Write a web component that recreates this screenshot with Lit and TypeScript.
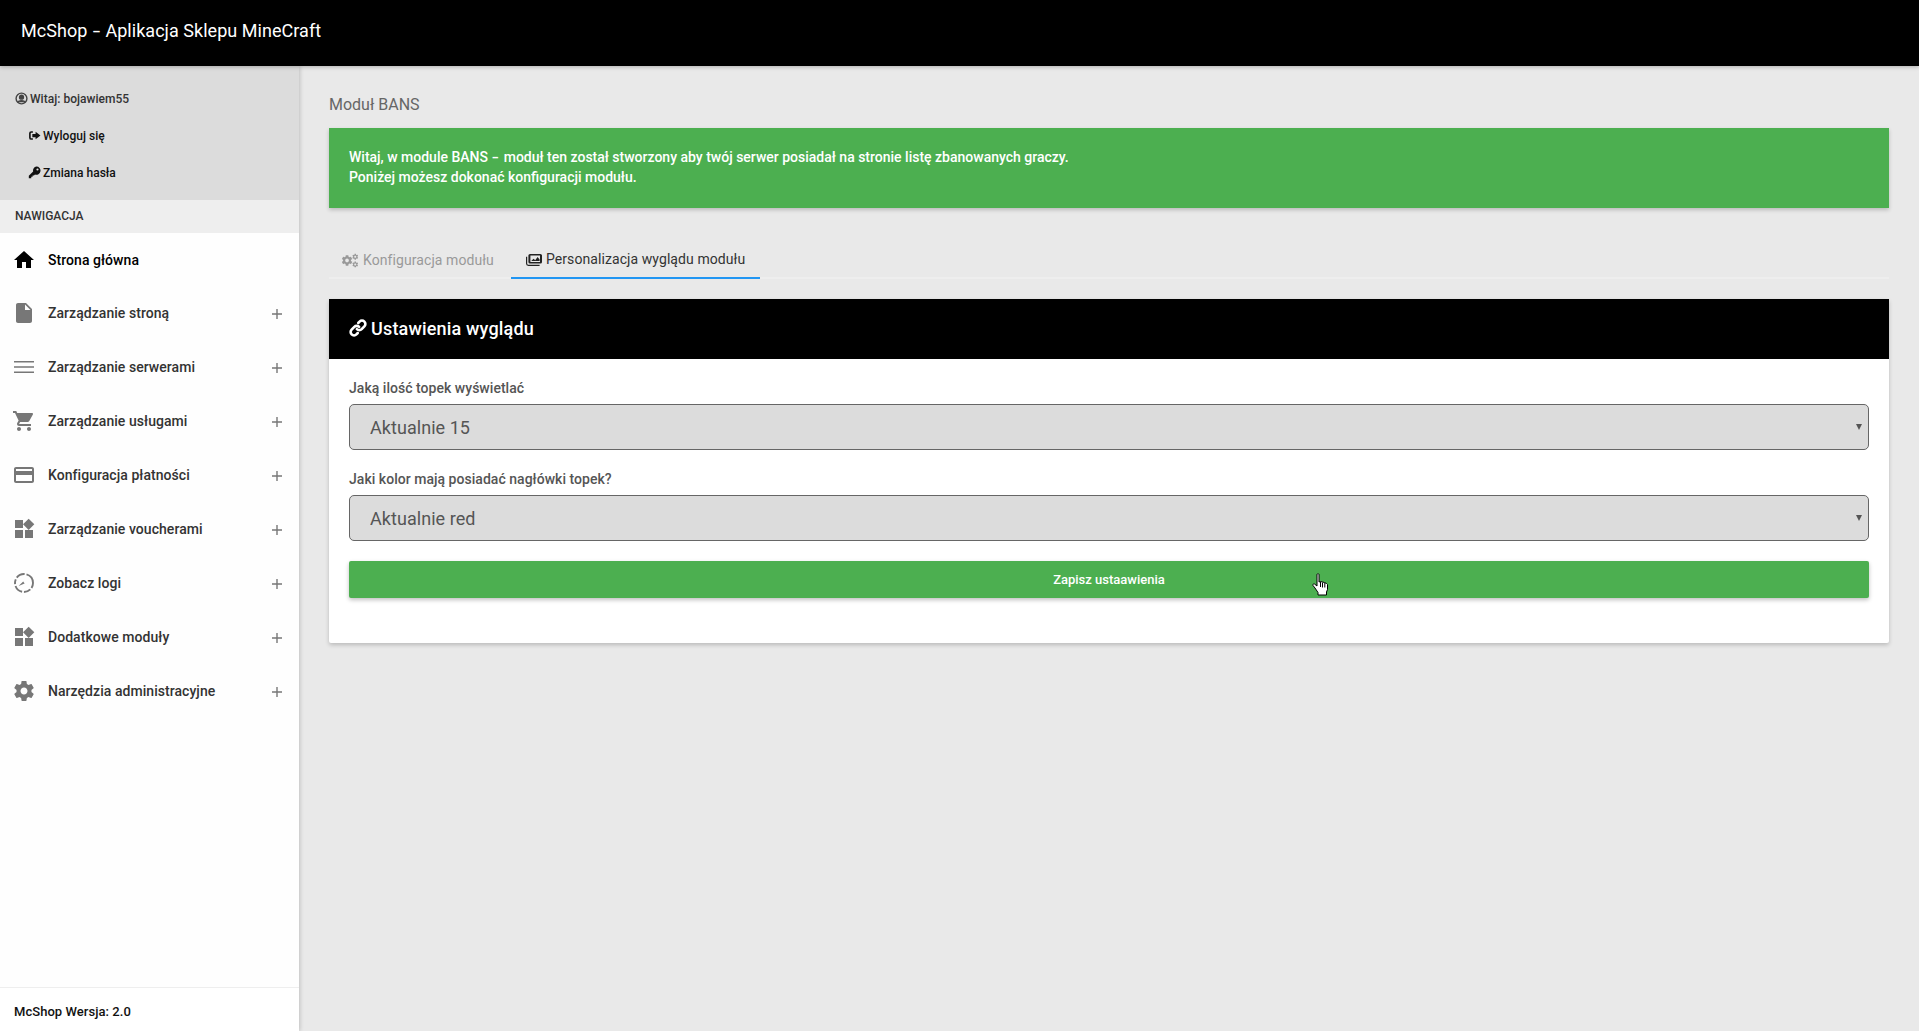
import { LitElement, html, css, svg } from "lit";
import { customElement } from "lit/decorators.js";

const GEAR = "M19.43 12.98c.04-.32.07-.64.07-.98s-.03-.66-.07-.98l2.11-1.65c.19-.15.24-.42.12-.64l-2-3.46c-.12-.22-.39-.3-.61-.22l-2.49 1c-.52-.4-1.08-.73-1.69-.98l-.38-2.65C14.46 2.18 14.25 2 14 2h-4c-.25 0-.46.18-.49.42l-.38 2.65c-.61.25-1.17.59-1.69.98l-2.49-1c-.23-.09-.49 0-.61.22l-2 3.46c-.13.22-.07.49.12.64l2.11 1.65c-.04.32-.07.65-.07.98s.03.66.07.98l-2.11 1.65c-.19.15-.24.42-.12.64l2 3.46c.12.22.39.3.61.22l2.49-1c.52.4 1.08.73 1.69.98l.38 2.65c.03.24.24.42.49.42h4c.25 0 .46-.18.49-.42l.38-2.65c.61-.25 1.17-.59 1.69-.98l2.49 1c.23.09.49 0 .61-.22l2-3.46c.12-.22.07-.49-.12-.64l-2.11-1.65zM12 15.500c-1.93 0-3.500-1.570-3.500-3.500s1.570-3.500 3.500-3.500 3.500 1.570 3.500 3.500-1.570 3.500-3.500 3.500z";

const P: Record<string, any> = {
  home: svg`<path d="M10 20v-6h4v6h5v-8h3L12 3 2 12h3v8z"/>`,
  file: svg`<path d="M6 2c-1.1 0-1.99.9-1.99 2L4 20c0 1.1.89 2 1.99 2H18c1.1 0 2-.9 2-2V8l-6-6H6zm7 7V3.5L18.5 9H13z"/>`,
  lines: svg`<path d="M2 6h20v1.600H2zM2 11.200h20v1.600H2zM2 16.400h20v1.600H2z"/>`,
  cart: svg`<path d="M7 18c-1.1 0-1.99.9-1.99 2S5.9 22 7 22s2-.9 2-2-.9-2-2-2zM1 2v2h2l3.6 7.59-1.35 2.45c-.16.28-.25.61-.25.96 0 1.1.9 2 2 2h12v-2H7.42c-.14 0-.25-.11-.25-.25l.03-.12.9-1.63h7.45c.75 0 1.41-.41 1.75-1.03l3.58-6.49c.08-.14.12-.31.12-.48 0-.55-.45-1-1-1H5.21l-.94-2H1zm16 16c-1.1 0-1.99.9-1.99 2s.89 2 1.99 2 2-.9 2-2-.9-2-2-2z"/>`,
  card: svg`<path d="M20 4H4c-1.11 0-1.99.89-1.99 2L2 18c0 1.11.89 2 2 2h16c1.11 0 2-.89 2-2V6c0-1.11-.89-2-2-2zm0 14H4v-6h16v6zm0-10H4V6h16v2z"/>`,
  widgets: svg`<path d="M13 13v8h8v-8h-8zM3 21h8v-8H3v8zM3 3v8h8V3H3zm13.66-1.31L11 7.34 16.66 13l5.66-5.66-5.66-5.65z"/>`,
  timer: svg`<circle cx="12" cy="12" r="9" fill="none" stroke="currentColor" stroke-width="1.9" stroke-dasharray="5.200 1.900 7 1.900 9 1.900 5 1.900 9 1.900 13"/><path d="M8.600 17.200l2-6.200 2.200 1.200z" transform="rotate(28 12 12)"/>`,
  gear: svg`<path d=${GEAR}/>`,
};

const ic = (n: string) => html`<svg class="mi" viewBox="0 0 24 24" fill="currentColor">${P[n]}</svg>`;

const items: [string, string][] = [
  ["file", "Zarządzanie stroną"],
  ["lines", "Zarządzanie serwerami"],
  ["cart", "Zarządzanie usługami"],
  ["card", "Konfiguracja płatności"],
  ["widgets", "Zarządzanie voucherami"],
  ["timer", "Zobacz logi"],
  ["widgets", "Dodatkowe moduły"],
  ["gear", "Narzędzia administracyjne"],
];

@customElement("app-root")
export class AppRoot extends LitElement {
  static styles = css`
    :host { display: flex; flex-direction: column; height: 100vh; overflow: hidden; font-family: Roboto, "Liberation Sans", sans-serif; background: #e9e9e9; position: relative; }
    * { box-sizing: border-box; }
    .dash { display: inline-block; transform: scaleX(1.5); margin: 0 2px; }
    .top { height: 66px; flex: none; background: #000; color: #fff; display: flex; align-items: center; padding: 0 0 6px 21px; font-size: 18px; letter-spacing: .04px; white-space: pre; position: relative; z-index: 3; box-shadow: 0 1px 4px rgba(0,0,0,.25); }
    .body { flex: 1; display: flex; min-height: 0; }
    .side { width: 299px; flex: none; background: #fefefe; display: flex; flex-direction: column; box-shadow: 1px 0 4px rgba(0,0,0,.18); position: relative; z-index: 2; }
    .user { background: #dcdcdc; height: 134px; padding-top: 14px; font-size: 12px; font-weight: 500; letter-spacing: .02px; }
    .urow { height: 37px; display: flex; align-items: center; gap: 2px; color: #111; }
    .urow.hi { padding-left: 15px; color: #333; }
    .urow.sub { padding-left: 28px; }
    .urow svg { width: 13px; height: 13px; flex: none; }
    .nav-h { background: #eee; height: 33px; display: flex; align-items: center; padding: 0 0 2px 15px; font-size: 12px; font-weight: 500; color: #333; }
    .menu { flex: 1; }
    .item { height: 54px; display: flex; align-items: center; padding: 0 17px 0 12px; font-size: 14px; font-weight: 500; color: #333; letter-spacing: .05px; }
    .item:first-child { color: #000; height: 53px; }
    .item:first-child .mi { color: #000; }
    .mi { width: 24px; height: 24px; color: #777; flex: none; margin-right: 12px; }
    .item .lbl { flex: 1; }
    .plus { width: 10px; height: 10px; flex: none; color: #777; position: relative; top: 1px; }
    .foot { height: 44px; flex: none; border-top: 1px solid #eee; background: #fff; display: flex; align-items: center; padding: 4px 0 0 14px; font-size: 13px; font-weight: 500; color: #111; letter-spacing: .05px; }
    .main { flex: 1; min-width: 0; padding: 0 30px; }
    h1 { margin: 0; height: 62px; display: flex; align-items: center; padding-top: 14px; font-size: 16px; font-weight: 400; color: #666; }
    .alert { height: 80px; background: #4caf50; color: #fff; padding: 19px 20px 20px; font-size: 14px; font-weight: 500; line-height: 20px; box-shadow: 0 2px 4px rgba(0,0,0,.2); margin-bottom: 30px; }
    .tabs { display: flex; height: 41px; border-bottom: 2px solid #eee; font-size: 14px; letter-spacing: .08px; }
    .tab { display: flex; align-items: center; gap: 4px; height: 41px; padding: 3px 15px 0; color: #999; }
    .tab.first { padding-left: 13px; padding-right: 17px; }
    .tab.on { color: #333; border-bottom: 2px solid #2196f3; }
    .tab svg { width: 17px; height: 15px; flex: none; }
    .tab.on svg { width: 16px; }
    .card { margin-top: 20px; background: #fff; box-shadow: 0 2px 4px rgba(0,0,0,.2); border-radius: 2px; }
    .card-h { height: 60px; background: #000; color: #fff; display: flex; align-items: center; gap: 4px; padding: 0 0 2px 20px; font-size: 18px; font-weight: 500; letter-spacing: .17px; }
    .card-h svg { width: 18px; height: 18px; flex: none; }
    .card-b { padding: 20px 20px 45px; }
    label { display: block; font-size: 14px; font-weight: 500; color: #555; line-height: 18px; margin-bottom: 7px; letter-spacing: .03px; }
    .sel { position: relative; height: 46px; margin-bottom: 20px; }
    select { appearance: none; width: 100%; height: 46px; background: #dcdcdc; border: 1px solid #666; border-radius: 5px; padding: 0 20px; font: 400 18px Roboto, sans-serif; letter-spacing: .05px; color: #555; }
    .arrow { position: absolute; right: 7px; top: 20px; width: 6px; height: 6px; color: #555; }
    button { display: block; width: 100%; height: 37px; border: 0; border-radius: 2px; background: #4caf50; color: #fff; font: 500 13px Roboto, sans-serif; box-shadow: 0 2px 4px rgba(0,0,0,.25); }
    .cursor { position: absolute; left: 1312px; top: 573px; width: 17px; height: 23px; z-index: 5; }
  `;

  render() {
    return html`
      <header class="top"><span>McShop <span class="dash">-</span> Aplikacja Sklepu MineCraft</span></header>
      <div class="body">
        <aside class="side">
          <div class="user">
            <div class="urow hi">
              <svg viewBox="0 0 24 24" fill="none" stroke="#444" stroke-width="2.6"><circle cx="12" cy="12" r="10"/><circle cx="12" cy="9.500" r="3.600" fill="#444"/><path d="M5 19c2-4 12-4 14 0" fill="#444"/></svg>
              Witaj: bojawiem55
            </div>
            <div class="urow sub">
              <svg viewBox="0 0 24 24" fill="#111"><path d="M9 4H6a4 4 0 0 0-4 4v8a4 4 0 0 0 4 4h3v-3H6a1 1 0 0 1-1-1V8a1 1 0 0 1 1-1h3z"/><path d="M14 5l9 7-9 7v-4H8V9h6z"/></svg>
              Wyloguj się
            </div>
            <div class="urow sub">
              <svg viewBox="0 0 24 24" fill="#111"><path d="M15.500 1a7.500 7.500 0 1 1-2.600 14.500L11 17.500H8.500V20H6v2.500H1.500V18l8-8A7.500 7.500 0 0 1 15.500 1zm2 3.500a2 2 0 1 0 0 4 2 2 0 0 0 0-4z"/></svg>
              Zmiana hasła
            </div>
          </div>
          <div class="nav-h">NAWIGACJA</div>
          <nav class="menu">
            <div class="item">${ic("home")}<span class="lbl">Strona główna</span></div>
            ${items.map(([i, t]) => html`<div class="item">${ic(i)}<span class="lbl">${t}</span>
              <svg class="plus" viewBox="0 0 10 10" fill="currentColor"><path d="M4.300 0h1.400v4.300H10v1.400H5.700V10H4.300V5.700H0V4.300h4.300z"/></svg></div>`)}
          </nav>
          <div class="foot">McShop Wersja: 2.0</div>
        </aside>
        <main class="main">
          <h1>Moduł BANS</h1>
          <div class="alert">Witaj, w module BANS <span class="dash">-</span> moduł ten został stworzony aby twój serwer posiadał na stronie listę zbanowanych graczy.<br />Poniżej możesz dokonać konfiguracji modułu.</div>
          <div class="tabs">
            <div class="tab first">
              <svg viewBox="0 0 20 16" fill="#999">
                <g transform="translate(-1.500 0.500) scale(.62)"><path d=${GEAR}/></g>
                <g transform="translate(11.500 -.5) scale(.34)"><path d=${GEAR}/></g>
                <g transform="translate(11.500 8.500) scale(.34)"><path d=${GEAR}/></g>
              </svg>
              Konfiguracja modułu
            </div>
            <div class="tab on">
              <svg viewBox="0 0 20 16" fill="#222"><path d="M5 1h13a2 2 0 0 1 2 2v8a2 2 0 0 1-2 2H5a2 2 0 0 1-2-2V3a2 2 0 0 1 2-2zm.500 2v8h12V3zM6.500 10l3-3 2 2 3-4 2.500 3v2z" fill-rule="evenodd"/><path d="M0 4.500h1.500V13a1.500 1.500 0 0 0 1.500 1.500h14V16H3a3 3 0 0 1-3-3z"/></svg>
              Personalizacja wyglądu modułu
            </div>
          </div>
          <section class="card">
            <div class="card-h">
              <svg viewBox="0 0 24 24" fill="none" stroke="#fff" stroke-width="3.500" stroke-linecap="round"><path d="M10.500 13.500a4.500 4.500 0 0 0 6.400 0l3.600-3.600a4.500 4.500 0 0 0-6.400-6.400l-1.800 1.800"/><path d="M13.500 10.500a4.500 4.500 0 0 0-6.400 0l-3.600 3.600a4.500 4.500 0 0 0 6.400 6.400l1.800-1.800"/></svg>
              Ustawienia wyglądu
            </div>
            <div class="card-b">
              <label>Jaką ilość topek wyświetlać</label>
              <div class="sel">
                <select><option>Aktualnie 15</option></select>
                <svg class="arrow" viewBox="0 0 6 6" fill="currentColor"><path d="M0 0h6L3 6z"/></svg>
              </div>
              <label>Jaki kolor mają posiadać nagłówki topek?</label>
              <div class="sel">
                <select><option>Aktualnie red</option></select>
                <svg class="arrow" viewBox="0 0 6 6" fill="currentColor"><path d="M0 0h6L3 6z"/></svg>
              </div>
              <button>Zapisz ustaawienia</button>
            </div>
          </section>
        </main>
      </div>
      <svg class="cursor" viewBox="0 0 17 23"><path d="M5 1.500c0-1 2-1 2 0V9l1.500-.5 2 .5 2 .5 2 1 1 1v5l-1 2.500v3H6v-2.500L3 15 1 12.500c-.5-1 .5-2 1.500-1.500L5 13z" fill="#fff" stroke="#000" stroke-width="1"/><path d="M8.500 9v5M10.500 9.500v5M12.800 10v4.500" stroke="#000" stroke-width="1" fill="none"/></svg>
    `;
  }
}
